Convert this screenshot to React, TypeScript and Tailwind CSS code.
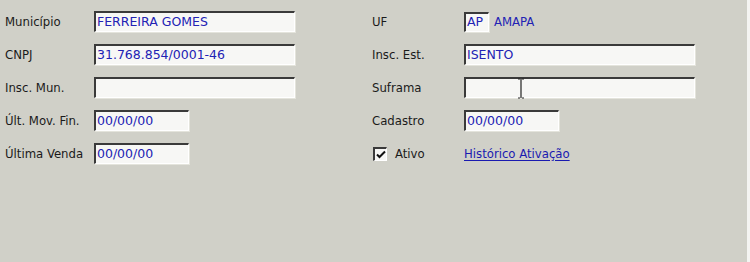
import React from "react";

const labelFont = "font-['Tahoma','DejaVu_Sans_Condensed','DejaVu_Sans',sans-serif]";
const fieldFont = "font-['Verdana','DejaVu_Sans',sans-serif]";

const Field = ({ value = "", className = "" }: { value?: string; className?: string }) => (
  <div
    className={`h-[21px] bg-[#f7f7f5] border-t-2 border-l-2 border-t-[#3a3a3a] border-l-[#3a3a3a] border-b border-r border-b-[#ffffff] border-r-[#ffffff] shadow-[1px_1px_0_0_#e4e4dc] flex items-center pl-[1px] text-[12.5px] leading-none text-[#2222b4] whitespace-nowrap overflow-hidden ${fieldFont} ${className}`}
  >
    {value}
  </div>
);

const Row = ({ label, children, labelW }: { label: string; children: React.ReactNode; labelW: string }) => (
  <div className="h-[33px] flex items-center">
    <span className={`${labelW} shrink-0 text-[13px] text-[#1a1a1a] ${labelFont}`}>{label}</span>
    {children}
  </div>
);

export default function App() {
  return (
    <div className="w-[750px] h-[262px] bg-[#d0d0c8] border-r-[3px] border-r-[#f4f4f2] flex pt-[5px]">
      <div className="w-[372px] pl-[5px] flex flex-col">
        <Row label="Município" labelW="w-[89px]">
          <Field value="FERREIRA GOMES" className="w-[201px]" />
        </Row>
        <Row label="CNPJ" labelW="w-[89px]">
          <Field value="31.768.854/0001-46" className="w-[201px]" />
        </Row>
        <Row label="Insc. Mun." labelW="w-[89px]">
          <Field className="w-[201px]" />
        </Row>
        <Row label="Últ. Mov. Fin." labelW="w-[89px]">
          <Field value="00/00/00" className="w-[95px]" />
        </Row>
        <Row label="Última Venda" labelW="w-[89px]">
          <Field value="00/00/00" className="w-[95px]" />
        </Row>
      </div>
      <div className="flex-1 flex flex-col">
        <Row label="UF" labelW="w-[92px]">
          <Field value="AP" className="w-[25px] !h-[20px]" />
          <span className={`ml-[5px] text-[13px] text-[#2222b4] ${labelFont}`}>AMAPA</span>
        </Row>
        <Row label="Insc. Est." labelW="w-[92px]">
          <Field value="ISENTO" className="w-[231px]" />
        </Row>
        <Row label="Suframa" labelW="w-[92px]">
          <div className="relative">
            <Field className="w-[231px]" />
            <svg className="absolute left-[52px] top-[1px]" width="10" height="22" viewBox="0 0 10 22">
              <path d="M2 1h2M6 1h2M5 1v19M2 20h2M6 20h2" stroke="#222" strokeWidth="1.2" fill="none" />
            </svg>
          </div>
        </Row>
        <Row label="Cadastro" labelW="w-[92px]">
          <Field value="00/00/00" className="w-[95px]" />
        </Row>
        <div className="h-[33px] flex items-center">
          <div className="w-[92px] flex items-center">
            <div className="w-[14px] h-[14px] ml-[1px] bg-[#f7f7f5] border-t-2 border-l-2 border-t-[#3a3a3a] border-l-[#3a3a3a] border-b border-r border-b-white border-r-white flex items-center justify-center">
              <svg width="10" height="9" viewBox="0 0 10 9">
                <path d="M1 4.5l2.5 2.5L9 1.5" stroke="#111" strokeWidth="2" fill="none" />
              </svg>
            </div>
            <span className={`ml-[8px] text-[13px] text-[#1a1a1a] ${labelFont}`}>Ativo</span>
          </div>
          <a className={`text-[13px] text-[#1a1ab0] underline underline-offset-2 ${labelFont}`}>Histórico Ativação</a>
        </div>
      </div>
    </div>
  );
}
